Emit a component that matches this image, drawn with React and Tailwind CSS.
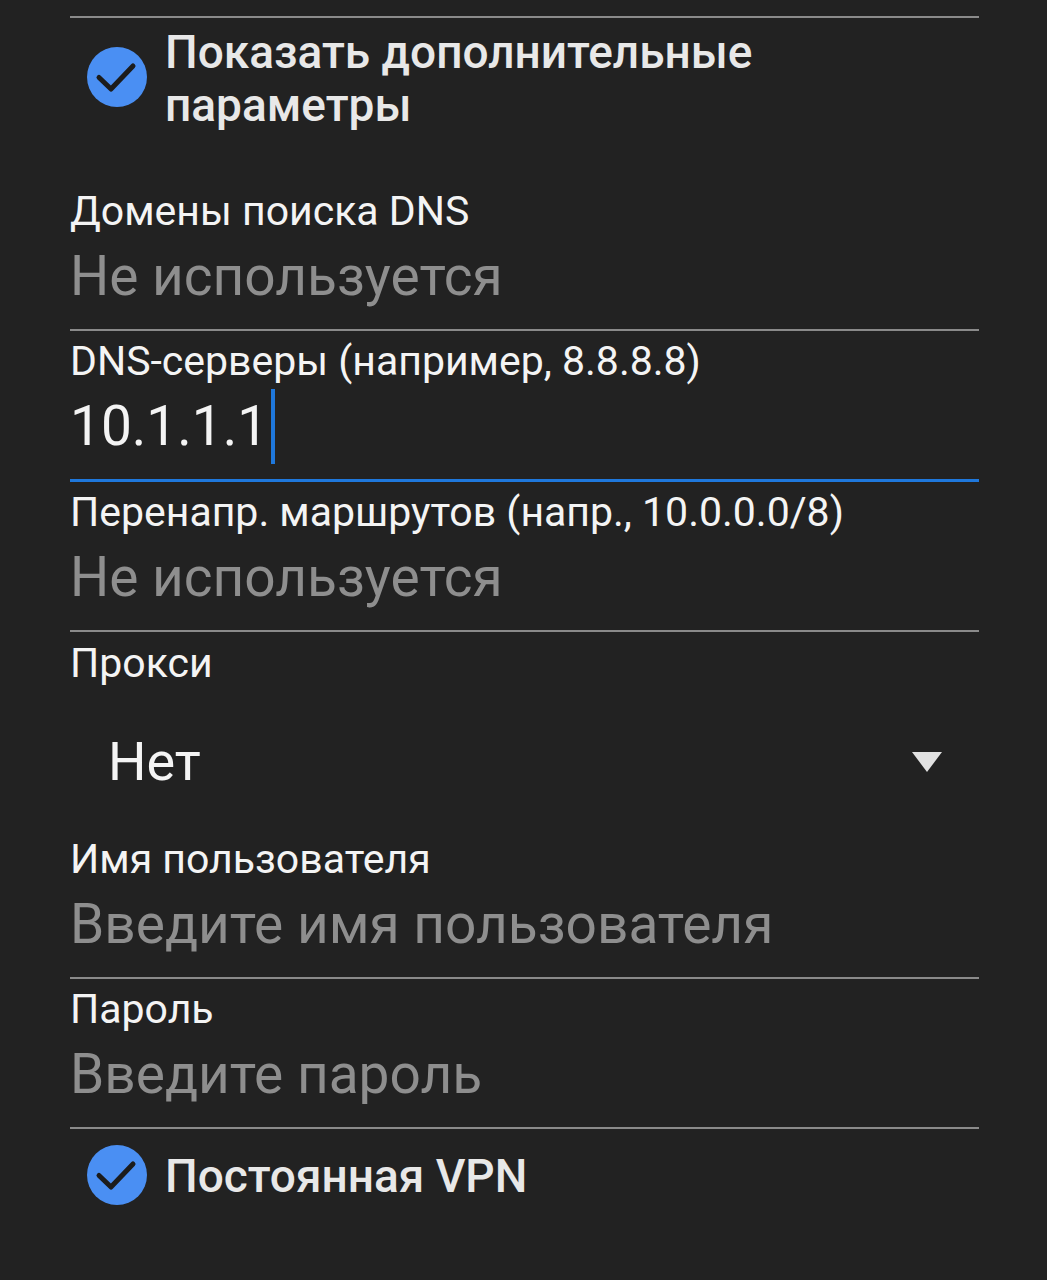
const font = { fontFamily: "Roboto, 'Noto Sans', sans-serif" };

const Divider = () => <div className="h-[2px] bg-[#8a8a8a]" />;

const Check = ({ className = "" }) => (
  <div
    className={
      "w-[60px] h-[60px] shrink-0 rounded-full bg-[#4a8ff3] " + className
    }
  >
    <svg width="60" height="60" viewBox="0 0 60 60" fill="none">
      <path
        d="M12 30.5l12 11.5L46 19"
        stroke="#1c1c1c"
        strokeWidth="5"
        strokeLinecap="round"
        strokeLinejoin="round"
      />
    </svg>
  </div>
);

const Field = ({ label, hint }) => (
  <div>
    <div className="mt-[6px] text-[41px] leading-[48px] text-[#f4f4f4] whitespace-nowrap">
      {label}
    </div>
    <div className="mt-[11px] mb-[23px] text-[55px] leading-[60px] text-[#8e8e8e] whitespace-nowrap">
      {hint}
    </div>
  </div>
);

export default function App() {
  return (
    <div
      className="w-[1047px] h-[1280px] bg-[#222222] pl-[70px] pr-[68px] pt-[16px] overflow-hidden"
      style={font}
    >
      <Divider />

      {/* Show more options */}
      <div className="flex items-start mt-[8px]">
        <Check className="ml-[17px] mt-[21px]" />
        <div className="ml-[18px] text-[46px] leading-[53px] font-medium text-[#e8e8e8] whitespace-nowrap">
          Показать дополнительные
          <br />
          параметры
        </div>
      </div>

      <div className="mt-[55px]">
        <Field label="Домены поиска DNS" hint="Не используется" />
      </div>
      <Divider />

      {/* DNS servers (focused) */}
      <div>
        <div className="mt-[6px] text-[41px] leading-[48px] text-[#f4f4f4]">
          DNS-серверы (например, 8.8.8.8)
        </div>
        <div className="mt-[11px] mb-[23px] h-[60px] flex items-center">
          <span className="text-[55px] leading-[60px] text-[#f4f4f4]">
            10.1.1.1
          </span>
          <span className="ml-[3px] w-[4px] h-[75px] bg-[#1f78dc]" />
        </div>
      </div>
      <div className="h-[3px] bg-[#1f78dc]" />

      <Field
        label="Перенапр. маршрутов (напр., 10.0.0.0/8)"
        hint="Не используется"
      />
      <Divider />

      {/* Proxy */}
      <div className="mt-[7px] text-[41px] leading-[48px] text-[#f4f4f4]">
        Прокси
      </div>
      <div className="mt-[45px] flex items-center justify-between pl-[38px] pr-[37px] h-[60px]">
        <span className="text-[54px] leading-[60px] text-[#f4f4f4]">Нет</span>
        <svg width="30" height="20" viewBox="0 0 30 20">
          <path d="M0 0h30L15 20z" fill="#e2e2e2" />
        </svg>
      </div>

      <div className="mt-[43px]">
        <Field label="Имя пользователя" hint="Введите имя пользователя" />
      </div>
      <Divider />

      <Field label="Пароль" hint="Введите пароль" />
      <Divider />

      {/* Always-on VPN */}
      <div className="flex items-start mt-[16px]">
        <Check className="ml-[17px]" />
        <div className="ml-[18px] mt-[6px] text-[46px] leading-[50px] font-medium text-[#e8e8e8]">
          Постоянная VPN
        </div>
      </div>
    </div>
  );
}
